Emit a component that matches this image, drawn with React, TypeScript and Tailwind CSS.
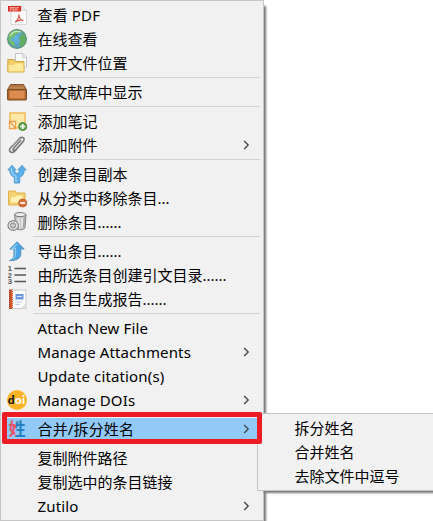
import type { ReactNode } from 'react';

function Pdf() {
  return (
    <svg width="22" height="22" viewBox="0 0 22 22">
      <path d="M5 2h11l4.500 4.500v14H5z" fill="#fafafa" stroke="#d6d6d6" />
      <path d="M15.500 2v4.500h5" fill="#e8e8e8" stroke="#d2d2d2" strokeWidth=".7" />
      <rect x="2" y="2" width="13" height="5.500" fill="#dc2a20" />
      <text x="3.800" y="6.500" fontSize="4.600" fontWeight="bold" fill="#f8c9c4" className="font-['Liberation_Sans',sans-serif]">PDF</text>
      <path d="M9 18c2-1.200 4-4.500 4-7.500 0 3.500 2 6 4.500 6-3-.8-6.200 0-8 1.500" fill="none" stroke="#e2524b" strokeWidth="1.200" />
    </svg>
  );
}

function Globe() {
  return (
    <svg width="22" height="22" viewBox="0 0 22 22">
      <defs>
        <radialGradient id="sea" cx=".45" cy=".45">
          <stop offset="0" stopColor="#62b5ea" />
          <stop offset="1" stopColor="#5a9db8" />
        </radialGradient>
      </defs>
      <circle cx="11" cy="11" r="9.400" fill="url(#sea)" stroke="#5d9469" strokeWidth="1.200" />
      <path d="M2.500 8Q5 2.300 11.500 2.200l2.500 1.300-2 2.200-2.500.8-1 2.500-3 .5-.5 3 3 1.500 1.500 4.500Q1 15.500 2.500 8z" fill="#75bd6a" />
      <path d="M15 4.500l3.500 2 1.400 5-1.700 4.500-3.700 3-1.500-3.500 1.500-2.500-1.500-2 1-3 1.500-.5z" fill="#64ad5e" />
      <path d="M4 8c2-4 6-5.500 11-4" stroke="#c6e8c2" strokeWidth="1.300" fill="none" />
    </svg>
  );
}

function FolderDoc() {
  return (
    <svg width="22" height="22" viewBox="0 0 22 22">
      <path d="M9.500 1.500h7.500l3.500 3.500v10H9.500z" fill="#f9fafa" stroke="#c0c4c8" />
      <path d="M16.500 1.500v4h4" fill="#e4e6e8" stroke="#c2c6c9" strokeWidth=".8" />
      <path d="M1.800 7.500h6l1.500 2H18V20H1.800z" fill="#f3cd66" stroke="#d3a646" />
      <path d="M2.500 12.500h5l1.500-1.500h8.500v8.500h-15z" fill="#fde99b" stroke="#ebc864" strokeWidth=".8" />
    </svg>
  );
}

function Box() {
  return (
    <svg width="22" height="22" viewBox="0 0 22 22">
      <path d="M4.500 3.500h13l3 5.500H1.500z" fill="#b07846" stroke="#855328" strokeLinejoin="round" />
      <rect x="1.500" y="8.500" width="19" height="10.500" rx=".8" fill="#a8652f" stroke="#80501f" />
      <rect x="3.500" y="10" width="15" height="7.500" fill="#de8b50" />
      <path d="M3.500 10.200h15M4 6.800h14" stroke="#d5975f" strokeWidth=".7" />
    </svg>
  );
}

function Note() {
  return (
    <svg width="22" height="22" viewBox="0 0 22 22">
      <path d="M4 3h15v15H4z" fill="#fde8a8" stroke="#f4ba58" strokeWidth="1.500" />
      <path d="M3.500 11.500h6v7h-6z" fill="#fff3d0" stroke="#f0a04a" strokeWidth="1.300" />
      <path d="M4 12l5.500 6" stroke="#ea9440" strokeWidth="1.200" />
      <circle cx="16.700" cy="16.500" r="4" fill="#5ea34c" stroke="#4b8a3f" />
      <path d="M16.700 14v5M14.200 16.500h5" stroke="white" strokeWidth="1.700" />
    </svg>
  );
}

function Clip() {
  return (
    <svg width="22" height="22" viewBox="0 0 22 22" fill="none" strokeLinecap="round">
      <path d="M7.500 14.500l7-8M6 12.500l7.500-8c2.500-2.500 6-.5 4 2.500L9 16.800c-3.500 3.500-7.500.6-4.200-3.300L6 12.200M7.500 14.500c-1.300 1.400.3 2.600 1.500 1.400" stroke="#7b7b7b" strokeWidth="1.700" />
      <path d="M5 13.500l8.500-9" stroke="#bbb" strokeWidth=".6" />
    </svg>
  );
}

function Fork() {
  return (
    <svg width="22" height="22" viewBox="0 0 22 22">
      <path d="M8.300 20v-5.500C5 12.800 3.800 10.500 3.800 7H1.800L6 2.300 10.200 7H8.300c0 1.500.9 2.600 2.700 3.600 1.800-1 2.700-2.100 2.700-3.600h-1.900L16 2.300 20.200 7h-2c0 3.500-1.200 5.800-4.500 7.500V20z" fill="#5aaeea" stroke="#5299cc" strokeLinejoin="round" strokeWidth=".9" />
      <path d="M5.500 5v2.500c0 3 2 4.500 4.500 6V19" stroke="#9bd4f8" strokeWidth="1.300" fill="none" />
    </svg>
  );
}

function FolderRemove() {
  return (
    <svg width="22" height="22" viewBox="0 0 22 22">
      <path d="M2.500 4h6.500l1.500 2H19V18H2.500z" fill="#f5d375" stroke="#dfb04c" />
      <path d="M4.500 9.500h4.500L10.500 8h6.500v8H4.500z" fill="#fff0b4" stroke="#efcb6c" />
      <circle cx="16.700" cy="16" r="4" fill="#dc6f3c" stroke="#c8622f" />
      <path d="M14.200 16h5" stroke="white" strokeWidth="1.700" />
    </svg>
  );
}

function Trash() {
  return (
    <svg width="22" height="22" viewBox="0 0 22 22">
      <path d="M8.500 3.500l1.500 14c2 2 7.500 1.500 9-.5l1-13.500z" fill="#c9c9c9" stroke="#858585" />
      <ellipse cx="14.200" cy="3.600" rx="5.700" ry="2" fill="#ededed" stroke="#757575" />
      <path d="M12.500 7l.7 9.500M16 7v9.500" stroke="#efefef" strokeWidth="1.300" />
      <path d="M18.300 6l-.6 10.500" stroke="#969696" />
      <ellipse cx="7.200" cy="14.500" rx="5.200" ry="4.800" fill="#e6e6e6" stroke="#858585" strokeWidth="1.200" />
      <ellipse cx="7" cy="14.500" rx="2.600" ry="2.600" fill="#c9c9c9" stroke="#858585" />
    </svg>
  );
}

function Export() {
  return (
    <svg width="22" height="22" viewBox="0 0 22 22">
      <path d="M3.500 20.500C7 19.300 8 17 8 14V9H3.800L11 1.800 18.200 9h-3.400v5c0 4.500-4.300 6.800-11.300 6.500z" fill="#4ba5e4" stroke="#528fb9" strokeLinejoin="round" strokeWidth=".9" />
      <path d="M11 3.800l-4.500 4.500H9.500v6.200q0 3-2.500 4.500" fill="none" stroke="#93cff5" strokeWidth="1.200" />
    </svg>
  );
}

function NumberedList() {
  return (
    <svg width="22" height="22" viewBox="0 0 22 22">
      <g fontSize="7.500" fontWeight="bold" fill="#555" className="font-['Liberation_Sans',sans-serif]">
        <text x="1.800" y="7">1</text>
        <text x="1.800" y="13.500">2</text>
        <text x="1.800" y="20">3</text>
      </g>
      <path d="M8.500 4.500h11.500M8.500 11h11.500M8.500 17.500h11.500" stroke="#555" strokeWidth="1.300" />
    </svg>
  );
}

function Report() {
  return (
    <svg width="22" height="22" viewBox="0 0 22 22">
      <rect x="4" y="2" width="16" height="18.500" fill="#fbfbfb" stroke="#c8cad0" />
      <rect x="3" y="1.500" width="4" height="19.500" fill="#d05a30" />
      <path d="M3.800 2v19" stroke="#a64032" strokeWidth="1.300" strokeDasharray="1 1" />
      <path d="M6.800 2v19" stroke="#eee6e1" strokeWidth="1.300" strokeDasharray="1 1" />
      <rect x="9.500" y="6" width="8" height="5.500" fill="#6c95de" />
      <path d="M11 8.500h5" stroke="#dbe6fa" />
      <path d="M9.500 14h7M9.500 16.500h4" stroke="#b8cdea" />
      <path d="M14.500 20.500l5.500-5.500v5.500z" fill="#ddd" />
    </svg>
  );
}

function Doi() {
  return (
    <svg width="22" height="22" viewBox="0 0 22 22">
      <circle cx="11" cy="11" r="10" fill="#fcb426" />
      <text x="1.700" y="14.700" fontSize="12" fontWeight="900" textLength="17.500" className="font-['Lato',sans-serif]">
        <tspan fill="#171717">d</tspan>
        <tspan fill="#fff">oi</tspan>
      </text>
    </svg>
  );
}

function Surname() {
  return (
    <svg width="22" height="22" viewBox="0 0 22 22" className="overflow-visible">
      <defs>
        <linearGradient id="split">
          <stop offset=".45" stopColor="#ea5166" />
          <stop offset=".45" stopColor="#287fbd" />
        </linearGradient>
      </defs>
      <text x="2.500" y="17.300" fontSize="17" fontWeight="bold" fill="url(#split)" className="font-['Noto_Sans_CJK_SC',sans-serif]">姓</text>
    </svg>
  );
}

function Chevron() {
  return (
    <svg width="7" height="10" viewBox="0 0 7 10" className="mr-[11px] ml-auto" fill="none" stroke="#444" strokeWidth="1.300">
      <path d="M1.200 1l4 4-4 4" />
    </svg>
  );
}

type ItemProps = { label: string; icon?: ReactNode; sub?: boolean; active?: boolean; latin?: boolean };

function Item({ label, icon, sub, active, latin }: ItemProps) {
  return (
    <div className={`flex h-6 shrink-0 items-center pb-[2px] ${active ? 'bg-[#91c9f7]' : ''}`}>
      <div className="flex h-[22px] w-[34.500px] shrink-0 items-center pl-[3px]">{icon}</div>
      <span className={`whitespace-nowrap leading-[22px] ${latin ? 'tracking-[0.14px]' : ''}`}>{label}</span>
      {sub && <Chevron />}
    </div>
  );
}

function Separator() {
  return (
    <div className="h-[5px] shrink-0 pt-px pr-px pl-[30px]">
      <div className="h-px bg-[#d3d3d3]" />
    </div>
  );
}

export default function App() {
  return (
    <div className="relative h-[521px] w-[433px] overflow-hidden bg-white font-['Noto_Sans','Noto_Sans_CJK_SC',sans-serif] text-[15px] text-black">
      <div className="absolute top-[6px] left-[6px] h-[530px] w-[258px] shadow-[2px_0_2px_#777]" />
      <div className="relative flex h-[521px] w-[264px] flex-col border border-[#c6c6c6] bg-[#f1f1f1] px-[2px] pt-[3px]">
        <Item label="查看 PDF" icon={<Pdf />} latin />
        <Item label="在线查看" icon={<Globe />} />
        <Item label="打开文件位置" icon={<FolderDoc />} />
        <Separator />
        <Item label="在文献库中显示" icon={<Box />} />
        <Separator />
        <Item label="添加笔记" icon={<Note />} />
        <Item label="添加附件" icon={<Clip />} sub />
        <Separator />
        <Item label="创建条目副本" icon={<Fork />} />
        <Item label="从分类中移除条目..." icon={<FolderRemove />} />
        <Item label="删除条目......" icon={<Trash />} />
        <Separator />
        <Item label="导出条目......" icon={<Export />} />
        <Item label="由所选条目创建引文目录......" icon={<NumberedList />} />
        <Item label="由条目生成报告......" icon={<Report />} />
        <Separator />
        <Item label="Attach New File" latin />
        <Item label="Manage Attachments" latin sub />
        <Item label="Update citation(s)" latin />
        <Item label="Manage DOIs" icon={<Doi />} latin sub />
        <Separator />
        <Item label="合并/拆分姓名" icon={<Surname />} latin sub active />
        <Separator />
        <Item label="复制附件路径" />
        <Item label="复制选中的条目链接" />
        <Item label="Zutilo" latin sub />
      </div>
      <div className="absolute top-[419px] left-[264px] h-[72px] w-[180px] shadow-[0_2px_2px_#777]" />
      <div className="absolute top-[413px] left-[257px] flex h-[78px] w-[190px] flex-col border border-[#c6c6c6] bg-[#f1f1f1] px-[2px] pt-[3px]">
        <Item label="拆分姓名" />
        <Item label="合并姓名" />
        <Item label="去除文件中逗号" />
      </div>
      <div className="absolute top-[412px] left-[2px] h-[32px] w-[260px] rounded-[2px] border-[5px] border-[#ed1c24]" />
    </div>
  );
}
